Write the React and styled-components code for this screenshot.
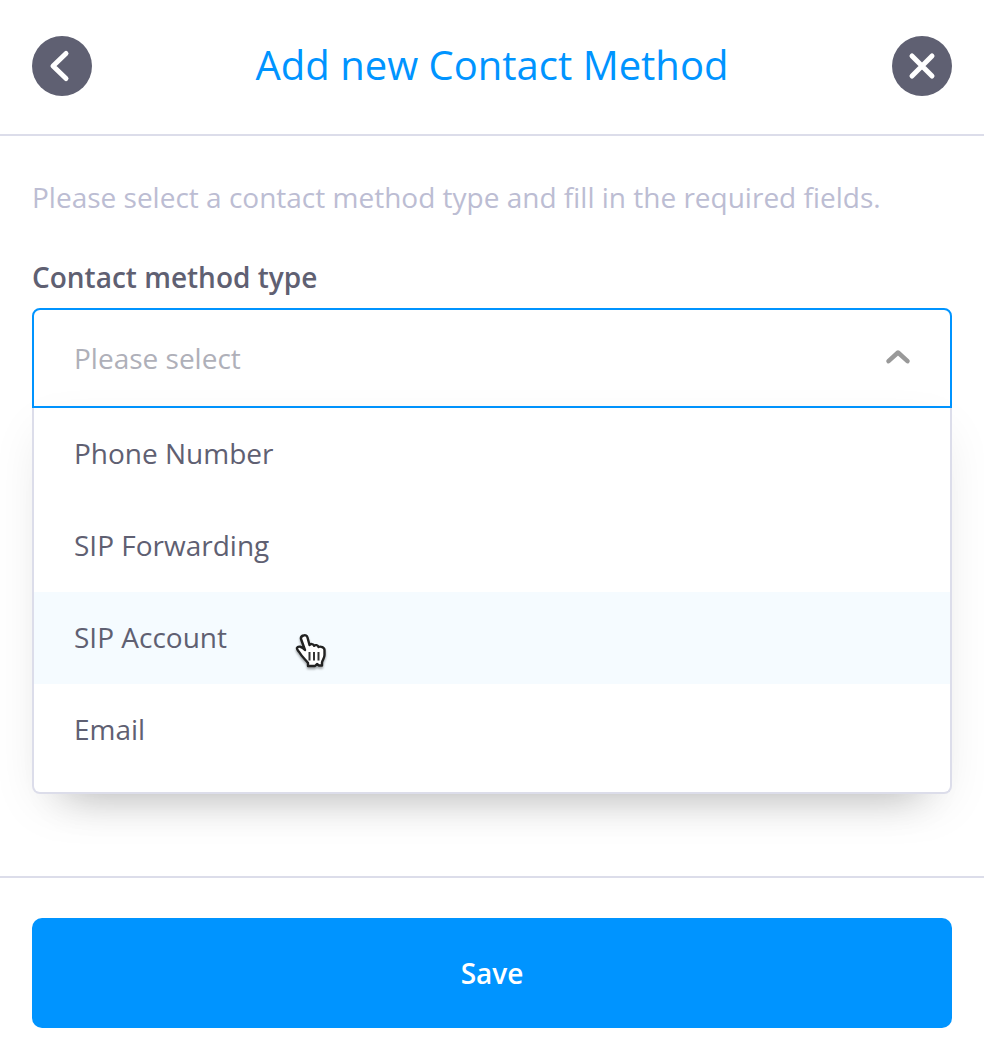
import { useState } from 'react';
import styled, { createGlobalStyle } from 'styled-components';

const GlobalStyle = createGlobalStyle`
  *, *::before, *::after {
    box-sizing: border-box;
  }
  body {
    margin: 0;
    background: #ffffff;
    color: #5f6072;
    font-family: 'Open Sans', 'Noto Sans', sans-serif;
    font-size: 28px;
  }
`;

const Modal = styled.div`
  width: 100%;
  height: 1056px;
  display: flex;
  flex-direction: column;
  overflow: hidden;
`;

const Header = styled.header`
  height: 136px;
  padding: 0 32px 2px;
  display: flex;
  align-items: center;
  justify-content: space-between;
  border-bottom: 2px solid #dcddea;
`;

const Title = styled.h1`
  margin: 0 0 2px;
  font-size: 40px;
  font-weight: 400;
  line-height: 54px;
  color: #0094ff;
`;

const RoundButton = styled.button`
  width: 60px;
  height: 60px;
  padding: 0;
  border: none;
  border-radius: 50%;
  background: #5f6072;
  color: #ffffff;
  cursor: pointer;
`;

const Icon = styled.svg`
  display: block;
  fill: none;
  stroke: currentColor;
  stroke-width: 5;
  stroke-linecap: round;
  stroke-linejoin: round;
`;

const Body = styled.main`
  flex: 1;
  padding: 41px 32px 0;
`;

const Hint = styled.p`
  margin: 0 0 40px;
  line-height: 40px;
  color: #bcbdd3;
`;

const Label = styled.div`
  height: 51px;
  font-weight: 600;
  line-height: 40px;
`;

const Select = styled.div`
  position: relative;
`;

const Control = styled.div`
  height: 100px;
  padding: 0 38px 0 40px;
  display: flex;
  align-items: center;
  justify-content: space-between;
  border: 2px solid #0094ff;
  border-radius: 8px 8px 0 0;
  color: #afb0b9;
  cursor: pointer;
`;

const Arrow = styled(Icon)`
  color: #999999;
  stroke-width: 4.5;
`;

const Menu = styled.ul`
  height: 386px;
  margin: 0;
  padding: 0;
  list-style: none;
  background: #ffffff;
  border: 2px solid #dcddea;
  border-top: none;
  border-radius: 0 0 8px 8px;
  box-shadow: 0 36px 40px -36px rgba(0, 0, 0, 0.24), 0 16px 48px -10px rgba(0, 0, 0, 0.1);
`;

const Option = styled.li`
  height: 92px;
  padding: 0 40px;
  line-height: 90px;
  background: ${({ $active }) => ($active ? '#f5fbff' : 'transparent')};
  cursor: pointer;
`;

const Pointer = styled.svg`
  position: absolute;
  top: 325px;
  left: 262px;
  filter: drop-shadow(0 2px 1px rgba(0, 0, 0, 0.35));
  pointer-events: none;
`;

const Footer = styled.footer`
  height: 180px;
  padding: 40px 32px 28px;
  border-top: 2px solid #dcddea;
`;

const SaveButton = styled.button`
  width: 100%;
  height: 110px;
  padding: 0;
  border: none;
  border-radius: 10px;
  background: #0094ff;
  color: #ffffff;
  font: inherit;
  font-weight: 600;
  cursor: pointer;
`;

const methods = ['Phone Number', 'SIP Forwarding', 'SIP Account', 'Email'];

function App() {
  const [active, setActive] = useState('SIP Account');

  return (
    <>
      <GlobalStyle />
      <Modal>
        <Header>
          <RoundButton aria-label="Back">
            <Icon width="60" height="60" viewBox="0 0 60 60">
              <path d="M34 17.5L21 30L34 42.5" />
            </Icon>
          </RoundButton>
          <Title>Add new Contact Method</Title>
          <RoundButton aria-label="Close">
            <Icon width="60" height="60" viewBox="0 0 60 60">
              <path d="M20 20l20 20M40 20L20 40" />
            </Icon>
          </RoundButton>
        </Header>

        <Body>
          <Hint>Please select a contact method type and fill in the required fields.</Hint>
          <Label>Contact method type</Label>
          <Select>
            <Control>
              <span>Please select</span>
              <Arrow width="28" height="28" viewBox="0 0 28 28">
                <path d="M4.5 17.2L14 8.5l9.500 8.700" />
              </Arrow>
            </Control>
            <Menu>
              {methods.map((method) => (
                <Option
                  key={method}
                  $active={method === active}
                  onMouseEnter={() => setActive(method)}
                >
                  {method}
                </Option>
              ))}
            </Menu>
            <Pointer width="34" height="38" viewBox="0 0 34 38">
              <path
                d="M9.500 2.500c2-.8 3.500.3 4 2l2 7.500c1-1.500 4-1.200 4.500.8 1.200-1.200 4-.8 4.500 1.200 2-1 6 .2 6 3v5c0 3-2 5-2.500 7.500v3H25l-2-1.500-2 2h-7v-3c-2-3-6-6-8.500-10.500-1-1.700-3-3-2.500-4.500 1-2.500 5-1.500 8 2L7 6c-.4-1.700.8-3 2.500-3.500z"
                fill="#ffffff"
                stroke="#222222"
                strokeWidth="2.4"
                strokeLinejoin="round"
              />
              <path d="M15.500 19v8.500M20 19v8.500M24.500 19v8.500" stroke="#333333" strokeWidth="2" />
            </Pointer>
          </Select>
        </Body>

        <Footer>
          <SaveButton>Save</SaveButton>
        </Footer>
      </Modal>
    </>
  );
}

export default App;
